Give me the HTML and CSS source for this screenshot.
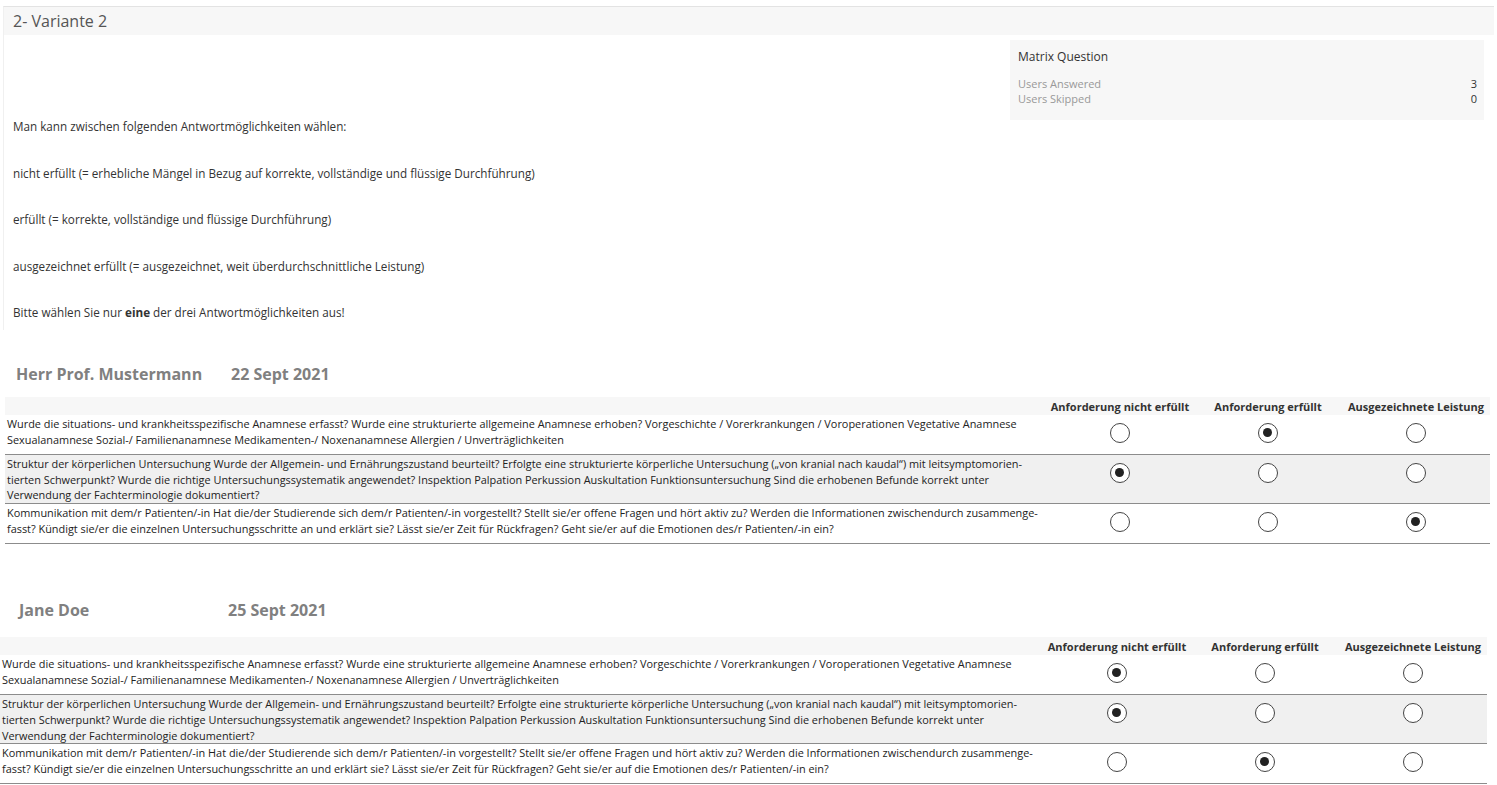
FILE: index.html
```html
<!DOCTYPE html>
<html lang="de">
<head>
    <meta charset="UTF-8">
    <meta name="viewport" content="width=device-width, initial-scale=1.0">
    <title>2- Variante 2</title>
    <link rel="stylesheet" href="styles.css">
</head>
<body>
    <div class="panel">
        <div class="panel-heading">2- Variante 2</div>
        <div class="panel-body">
            <div class="summary">
                <div class="summary-title">Matrix Question</div>
                <div class="summary-row"><span>Users Answered</span><span class="num">3</span></div>
                <div class="summary-row"><span>Users Skipped</span><span class="num">0</span></div>
            </div>
            <div class="intro">
                <p>Man kann zwischen folgenden Antwortmöglichkeiten wählen:</p>
                <p>nicht erfüllt (= erhebliche Mängel in Bezug auf korrekte, vollständige und flüssige Durchführung)</p>
                <p>erfüllt (= korrekte, vollständige und flüssige Durchführung)</p>
                <p>ausgezeichnet erfüllt (= ausgezeichnet, weit überdurchschnittliche Leistung)</p>
                <p>Bitte wählen Sie nur <b>eine</b> der drei Antwortmöglichkeiten aus!</p>
            </div>
        </div>
    </div>

    <!-- first evaluation -->
    <div class="session">
        <h2 class="session-head"><span class="who">Herr Prof. Mustermann</span><span>22 Sept 2021</span></h2>
        <table class="matrix">
            <thead>
                <tr>
                    <th></th>
                    <th>Anforderung nicht erfüllt</th>
                    <th>Anforderung erfüllt</th>
                    <th>Ausgezeichnete Leistung</th>
                </tr>
            </thead>
            <tbody>
                <tr>
                    <td class="q">Wurde die situations- und krankheitsspezifische Anamnese erfasst? Wurde eine strukturierte allgemeine Anamnese erhoben? Vorgeschichte / Vorerkrankungen / Voroperationen Vegetative Anamnese<br>Sexualanamnese Sozial-/ Familienanamnese Medikamenten-/ Noxenanamnese Allergien / Unverträglichkeiten</td>
                    <td class="opt"><input type="radio" name="a1" disabled></td>
                    <td class="opt"><input type="radio" name="a1" checked disabled></td>
                    <td class="opt"><input type="radio" name="a1" disabled></td>
                </tr>
                <tr class="alt">
                    <td class="q">Struktur der körperlichen Untersuchung Wurde der Allgemein- und Ernährungszustand beurteilt? Erfolgte eine strukturierte körperliche Untersuchung („von kranial nach kaudal“) mit leitsymptomorien-<br>tierten Schwerpunkt? Wurde die richtige Untersuchungssystematik angewendet? Inspektion Palpation Perkussion Auskultation Funktionsuntersuchung Sind die erhobenen Befunde korrekt unter<br>Verwendung der Fachterminologie dokumentiert?</td>
                    <td class="opt"><input type="radio" name="a2" checked disabled></td>
                    <td class="opt"><input type="radio" name="a2" disabled></td>
                    <td class="opt"><input type="radio" name="a2" disabled></td>
                </tr>
                <tr>
                    <td class="q">Kommunikation mit dem/r Patienten/-in Hat die/der Studierende sich dem/r Patienten/-in vorgestellt? Stellt sie/er offene Fragen und hört aktiv zu? Werden die Informationen zwischendurch zusammenge-<br>fasst? Kündigt sie/er die einzelnen Untersuchungsschritte an und erklärt sie? Lässt sie/er Zeit für Rückfragen? Geht sie/er auf die Emotionen des/r Patienten/-in ein?</td>
                    <td class="opt"><input type="radio" name="a3" disabled></td>
                    <td class="opt"><input type="radio" name="a3" disabled></td>
                    <td class="opt"><input type="radio" name="a3" checked disabled></td>
                </tr>
            </tbody>
        </table>
    </div>

    <!-- second evaluation -->
    <div class="session session-second">
        <h2 class="session-head"><span class="who">Jane Doe</span><span>25 Sept 2021</span></h2>
        <table class="matrix">
            <thead>
                <tr>
                    <th></th>
                    <th>Anforderung nicht erfüllt</th>
                    <th>Anforderung erfüllt</th>
                    <th>Ausgezeichnete Leistung</th>
                </tr>
            </thead>
            <tbody>
                <tr>
                    <td class="q">Wurde die situations- und krankheitsspezifische Anamnese erfasst? Wurde eine strukturierte allgemeine Anamnese erhoben? Vorgeschichte / Vorerkrankungen / Voroperationen Vegetative Anamnese<br>Sexualanamnese Sozial-/ Familienanamnese Medikamenten-/ Noxenanamnese Allergien / Unverträglichkeiten</td>
                    <td class="opt"><input type="radio" name="b1" checked disabled></td>
                    <td class="opt"><input type="radio" name="b1" disabled></td>
                    <td class="opt"><input type="radio" name="b1" disabled></td>
                </tr>
                <tr class="alt">
                    <td class="q">Struktur der körperlichen Untersuchung Wurde der Allgemein- und Ernährungszustand beurteilt? Erfolgte eine strukturierte körperliche Untersuchung („von kranial nach kaudal“) mit leitsymptomorien-<br>tierten Schwerpunkt? Wurde die richtige Untersuchungssystematik angewendet? Inspektion Palpation Perkussion Auskultation Funktionsuntersuchung Sind die erhobenen Befunde korrekt unter<br>Verwendung der Fachterminologie dokumentiert?</td>
                    <td class="opt"><input type="radio" name="b2" checked disabled></td>
                    <td class="opt"><input type="radio" name="b2" disabled></td>
                    <td class="opt"><input type="radio" name="b2" disabled></td>
                </tr>
                <tr>
                    <td class="q">Kommunikation mit dem/r Patienten/-in Hat die/der Studierende sich dem/r Patienten/-in vorgestellt? Stellt sie/er offene Fragen und hört aktiv zu? Werden die Informationen zwischendurch zusammenge-<br>fasst? Kündigt sie/er die einzelnen Untersuchungsschritte an und erklärt sie? Lässt sie/er Zeit für Rückfragen? Geht sie/er auf die Emotionen des/r Patienten/-in ein?</td>
                    <td class="opt"><input type="radio" name="b3" disabled></td>
                    <td class="opt"><input type="radio" name="b3" checked disabled></td>
                    <td class="opt"><input type="radio" name="b3" disabled></td>
                </tr>
            </tbody>
        </table>
    </div>
</body>
</html>
```

FILE: styles.css
```css
/* General */
body {
    margin: 0;
    background-color: #fff;
    color: #333;
    font-family: "Open Sans", Arial, sans-serif;
    font-size: 12px;
}

/* Question panel */
.panel {
    margin: 6px 3px 0;
    border-top: 1px solid #e3e3e3;
    border-left: 1px solid #f0f0f0;
}

.panel-heading {
    background-color: #f7f7f7;
    height: 28px;
    line-height: 28px;
    padding-left: 9px;
    font-size: 16px;
    color: #555;
}

.panel-body {
    display: flex;
    flex-direction: column;
    padding: 5px 10px 9px 9px;
}

.summary {
    align-self: flex-end;
    width: 474px;
    height: 80px;
    box-sizing: border-box;
    padding: 8px 7px 0 8px;
    background-color: #f7f7f7;
}

.summary-title {
    font-size: 12px;
    line-height: 17px;
    color: #333;
    margin-bottom: 11px;
}

.summary-row {
    display: flex;
    justify-content: space-between;
    font-size: 11px;
    line-height: 15px;
    color: #999;
}

.summary-row .num {
    color: #333;
}

.intro {
    margin-top: -2px;
    font-size: 11.7px;
}

.intro p {
    margin: 0 0 29.5px;
    line-height: 17px;
}

.intro p:last-child {
    margin-bottom: 0;
}

.intro b {
    font-weight: 700;
}

/* Evaluations */
.session {
    margin: 33px 7px 0 5px;
}

.session-second {
    margin: 55px 10px 0 0;
}

.session-head {
    margin: 0 0 12px 11px;
    font-size: 16px;
    line-height: 22px;
    font-weight: 700;
    color: #808080;
}

.session-second .session-head {
    margin: 0 0 16px 19px;
}

.session-head .who {
    display: inline-block;
    width: 215px;
}

.session-second .session-head .who {
    width: 209px;
}

.matrix {
    width: 100%;
    border-collapse: collapse;
    font-size: 10.9px;
}

.matrix thead tr {
    background-color: #f7f7f7;
}

.matrix th {
    height: 18px;
    padding: 0;
    font-weight: 700;
    font-size: 11px;
    color: #333;
    text-align: center;
    white-space: nowrap;
}

.matrix th:not(:first-child) {
    width: 148px;
}

.matrix tbody tr {
    border-bottom: 1px solid #8c8c8c;
}

.matrix tbody tr.alt {
    background-color: #f0f0f0;
}

.matrix td {
    vertical-align: top;
}

.matrix td.q {
    padding: 1px 2px 0;
    line-height: 15.7px;
    color: #222;
    white-space: nowrap;
}

.matrix td.opt {
    padding: 8px 0 11px;
    text-align: center;
}

/* radio look */
.matrix input[type="radio"] {
    appearance: none;
    -webkit-appearance: none;
    margin: 0;
    width: 20px;
    height: 20px;
    border: 1.3px solid #444;
    border-radius: 50%;
    background-color: #fff;
    box-sizing: border-box;
    display: inline-block;
    vertical-align: top;
    position: relative;
}

.matrix input[type="radio"]:checked::after {
    content: "";
    position: absolute;
    left: 4.2px;
    top: 4.2px;
    width: 9px;
    height: 9px;
    border-radius: 50%;
    background-color: #222;
}
```
